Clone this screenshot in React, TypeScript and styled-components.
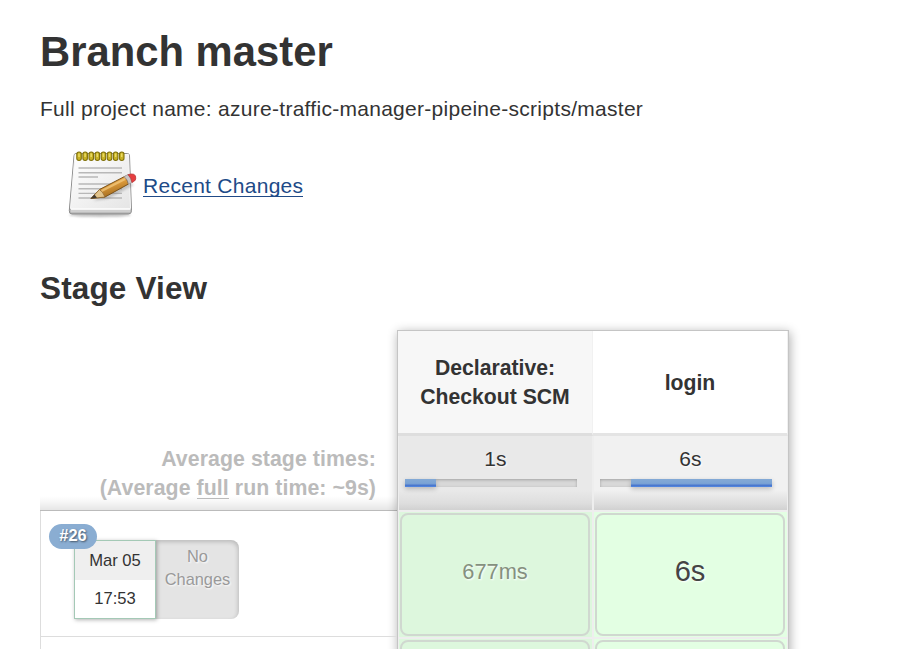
import React from "react";
import styled, { createGlobalStyle, css } from "styled-components";

const Global = createGlobalStyle`
  * { box-sizing: border-box; }
  body {
    margin: 0;
    background: #fff;
    color: #333;
    font: 21px/29px "Liberation Sans", Arial, sans-serif;
    letter-spacing: 0.28px;
    overflow: hidden;
  }
`;

const Page = styled.main`
  height: 649px;
  overflow: hidden;
  padding: 27px 0 0 40px;
`;

const Title = styled.h1`
  margin: 0;
  font-size: 41.8px;
  line-height: 50px;
  letter-spacing: 0;
`;

const ProjectName = styled.p`
  margin: 17px 0 0;
`;

const ChangesRow = styled.div`
  display: flex;
  align-items: center;
  height: 80px;
  margin: 23px 0 0 23px;
`;

const NotepadIcon = styled.svg`
  width: 80px;
  height: 80px;
  flex: none;
`;

const ChangesLink = styled.a`
  color: #204a87;
  text-decoration: none;
  border-bottom: 1px solid #204a87;
  line-height: 21px;
`;

const SectionTitle = styled.h2`
  margin: 43px 0 0;
  font-size: 31.5px;
  line-height: 38px;
  letter-spacing: 0.15px;
`;

const StageView = styled.section`
  display: flex;
  margin-top: 23px;
`;

const RunColumn = styled.div`
  width: 357px;
`;

const Averages = styled.div`
  height: 181px;
  padding: 115px 21px 0 0;
  text-align: right;
  font-size: 21.3px;
  font-weight: bold;
  letter-spacing: 0.07px;
  color: #bbb;
  border-bottom: 1px solid #bbb;
  background: linear-gradient(#fff 0, #fff 166px, #f6f6f6 172px, #e6e6e6 180px);
`;

const Full = styled.span`
  display: inline-block;
  line-height: 20px;
  border-bottom: 1px solid #bbb;
`;

const Run = styled.div`
  display: flex;
  align-items: flex-start;
  position: relative;
  height: 126px;
  padding: 29px 0 0 33px;
  border-left: 1px solid #ddd;
  border-bottom: 1px solid #ddd;
  letter-spacing: 0;
`;

const BuildBadge = styled.span`
  position: absolute;
  z-index: 2;
  top: 13px;
  left: 8px;
  width: 48px;
  height: 25px;
  border-radius: 13px;
  background: #8aadd2;
  color: #fff;
  font-size: 16.4px;
  font-weight: bold;
  line-height: 23px;
  text-align: center;
  text-shadow: 1px 1px 2px rgba(0, 0, 0, 0.5);
`;

const RunDate = styled.div`
  width: 82px;
  height: 79px;
  border: 1px solid #a4c9b6;
  box-shadow: 1px 1px 4px rgba(0, 0, 0, 0.3);
  background: #fff;
  font-size: 16.6px;
  text-align: center;
  z-index: 1;
`;

const Day = styled.div`
  height: 39px;
  line-height: 39px;
  background: #efefef;
`;

const Time = styled.div`
  line-height: 37px;
`;

const NoChanges = styled.div`
  width: 84px;
  height: 79px;
  margin-left: -1px;
  padding: 5px 0 0 1px;
  border-radius: 0 8px 8px 0;
  background: #e4e4e4;
  box-shadow: inset -1px 2px 4px rgba(0, 0, 0, 0.18);
  color: #999;
  font-size: 16.4px;
  line-height: 23px;
  text-align: center;
  text-shadow: 1px 1px 2px #fff;
`;

const StageTable = styled.div`
  display: grid;
  grid-template-columns: 195px 195px;
  width: 392px;
  height: 440px;
  border: 1px solid #c5c5c5;
  box-shadow: 1px 2px 10px rgba(0, 0, 0, 0.32);
  background: #eee;
`;

const Stage = styled.div<{ $shaded?: boolean }>`
  display: flex;
  flex-direction: column;
  ${(p) =>
    p.$shaded
      ? css`
          --head: #f7f7f7;
          --average: #e9e9e9;
          --cell: #ddf7dd;
          --rule: #dedede;
        `
      : css`
          --head: #fff;
          --average: #f1f1f1;
          --cell: #e3ffe3;
          --rule: #e4e4e4;
        `}
`;

const StageHeader = styled.div`
  display: flex;
  align-items: center;
  justify-content: center;
  height: 105px;
  border-right: 1px solid #f1f1f1;
  border-bottom: 3px solid var(--rule);
  background: var(--head);
  font-size: 21.2px;
  font-weight: bold;
  letter-spacing: 0;
  text-align: center;
`;

const StageAverage = styled.div`
  height: 74px;
  padding: 8px 15px 0 6px;
  margin: 0 1px 0 1px;
  background: linear-gradient(
    var(--average) 0,
    var(--average) 54px,
    #dedede 67px,
    #d1d1d1 74px
  );
  text-align: center;
  text-shadow: 1px 1px 2px #fff;
`;

const AverageTime = styled.div`
  padding-left: 9px;
  line-height: 30px;
`;

const Track = styled.div`
  display: flex;
  height: 8px;
  margin-top: 5px;
  background: #d8d8d8;
  box-shadow: inset 0 1px 3px rgba(0, 0, 0, 0.25);
`;

const Bar = styled.div<{ $from: number; $width: number }>`
  width: ${(p) => p.$width}px;
  margin-left: ${(p) => p.$from}px;
  background: linear-gradient(#83a9d5 0, #7ba3d5 55%, #4271cd 85%, #5b91e8 100%);
  box-shadow: 0 2px 5px rgba(0, 0, 0, 0.22);
`;

const StageResult = styled.div<{ $large?: boolean }>`
  flex: none;
  display: flex;
  height: 125px;
  margin: 2px 1px 0 1px;
  padding: 1px 2px 1px 1px;
  background: var(--cell);
  & + & {
    margin-top: 2px;
  }
  color: ${(p) => (p.$large ? "#444" : "#85907f")};
  font-size: ${(p) => (p.$large ? 29.1 : 21.8)}px;
  letter-spacing: 0;
  text-shadow: 1px 1px 2px #fff;
`;

const ResultBox = styled.div`
  display: flex;
  flex: 1;
  align-items: center;
  justify-content: center;
  padding: 0 0 7px 0;
  border: 2px solid #d0d8d0;
  border-radius: 8px;
`;

function Notepad() {
  return (
    <NotepadIcon viewBox="0 0 80 80">
      <defs>
        <linearGradient id="paper" x1="0" y1="0" x2="1" y2="1">
          <stop offset="0" stopColor="#fff" />
          <stop offset="1" stopColor="#e5e5e5" />
        </linearGradient>
        <linearGradient id="wood" x1="0" y1="0" x2=".45" y2="1">
          <stop offset="0" stopColor="#eec080" />
          <stop offset=".5" stopColor="#dd9b3b" />
          <stop offset="1" stopColor="#9e681d" />
        </linearGradient>
        <filter id="soft" x="-20%" y="-100%" width="140%" height="300%">
          <feGaussianBlur stdDeviation="1.2" />
        </filter>
      </defs>
      <ellipse cx="37" cy="69" rx="31" ry="2" fill="#999" opacity=".6" filter="url(#soft)" />
      <path d="M11 10Q11 7.500 13 7.500H64.500Q66.500 7.500 66.500 10L68.500 64.500Q68.500 68 65.500 68H9Q6 68 6.300 64.500Z" fill="#aaa" stroke="#8e8e8e" />
      <path d="M12 8.500H65.500L67.500 62.500H7.500Z" fill="url(#paper)" stroke="#f9f9f9" />
      <path d="M7.500 63.500H67.500V66.500H7.500Z" fill="#cfcfcf" />
      <path d="M8 63.500H67.500" stroke="#f4f4f4" />
      <path d="M15.500 22H59M15.500 26.700H59M15.500 31H35M15.500 38H59M15.500 42.700H59M15.500 47.400H59M15.500 52H59" fill="none" stroke="#b8b8b8" strokeWidth="1.400" />
      {Array.from({ length: 8 }, (_, i) => (
        <g key={i}>
          <rect x={13.8 + i * 6.1} y="6" width="4.500" height="8.500" rx="2.200" fill="#c9b326" stroke="#80710a" strokeWidth="1.100" />
          <path d={`M${16 + i * 6.1} 7.500V11`} stroke="#eadc64" strokeWidth="1.500" />
        </g>
      ))}
      <path d="M30 55L45 53L71 39L65 36Z" fill="#777" opacity=".35" filter="url(#soft)" />
      <path d="M28 52.500L36.500 43.500L62.500 30L65.500 38L42 51Z" fill="url(#wood)" stroke="#7b5219" />
      <path d="M28 52.500L36.500 43.500Q40 46 42 51Z" fill="#e2c48c" stroke="#8a622c" strokeWidth=".7" />
      <path d="M27.500 52.800L31.500 48.500L34 51.800Z" fill="#423b31" />
      <path d="M38.500 45L62 33" stroke="#f4cc83" strokeWidth="2" opacity=".7" />
      <path d="M61 30.700L65 28.600Q68.500 32 69 36.500L65.500 38.200Q65 33.500 61 30.700Z" fill="#c9c4c4" stroke="#969090" strokeWidth=".7" />
      <path d="M65 28.600L68 28Q71.500 27.500 72.500 30Q73.500 33.500 71.500 35L69 36.500Q68.500 32 65 28.600Z" fill="#e63e40" stroke="#ba3c3c" strokeWidth=".8" />
    </NotepadIcon>
  );
}

export default function App() {
  return (
    <Page>
      <Global />
      <Title>Branch master</Title>
      <ProjectName>
        Full project name: azure-traffic-manager-pipeine-scripts/master
      </ProjectName>
      <ChangesRow>
        <Notepad />
        <ChangesLink>Recent Changes</ChangesLink>
      </ChangesRow>
      <SectionTitle>Stage View</SectionTitle>
      <StageView>
        <RunColumn>
          <Averages>
            Average stage times:
            <br />
            (Average <Full>full</Full> run time: ~9s)
          </Averages>
          <Run>
            <BuildBadge>#26</BuildBadge>
            <RunDate>
              <Day>Mar 05</Day>
              <Time>17:53</Time>
            </RunDate>
            <NoChanges>
              No
              <br />
              Changes
            </NoChanges>
          </Run>
          <Run />
        </RunColumn>
        <StageTable>
          <Stage $shaded>
            <StageHeader>
              Declarative:
              <br />
              Checkout SCM
            </StageHeader>
            <StageAverage>
              <AverageTime>1s</AverageTime>
              <Track>
                <Bar $from={0} $width={31} />
              </Track>
            </StageAverage>
            <StageResult>
              <ResultBox>677ms</ResultBox>
            </StageResult>
            <StageResult>
              <ResultBox />
            </StageResult>
          </Stage>
          <Stage>
            <StageHeader>login</StageHeader>
            <StageAverage>
              <AverageTime>6s</AverageTime>
              <Track>
                <Bar $from={31} $width={141} />
              </Track>
            </StageAverage>
            <StageResult $large>
              <ResultBox>6s</ResultBox>
            </StageResult>
            <StageResult>
              <ResultBox />
            </StageResult>
          </Stage>
        </StageTable>
      </StageView>
    </Page>
  );
}
